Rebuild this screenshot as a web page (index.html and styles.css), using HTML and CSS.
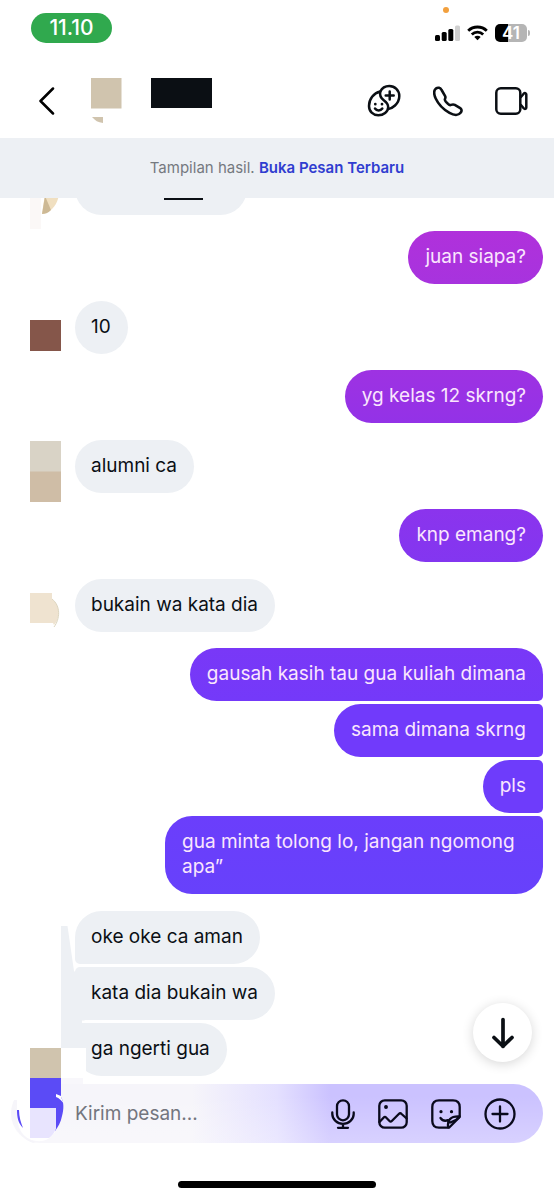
FILE: index.html
```html
<!DOCTYPE html>
<html lang="id">
<head>
<meta charset="utf-8">
<meta name="viewport" content="width=device-width, initial-scale=1">
<title>Pesan</title>
<link rel="stylesheet" href="styles.css">
</head>
<body>
<div class="screen">
  <div class="status">
    <span class="clock">11.10</span>
    <div class="indicators">
      <span class="rec-dot"></span>
      <svg width="25" height="16" viewBox="0 0 25 16"><rect x="0" y="10" width="5" height="6" rx="1.5"/><rect x="6.7" y="7" width="5" height="9" rx="1.5"/><rect x="13.3" y="4" width="5" height="12" rx="1.5"/><rect x="20" y="0.500" width="5" height="15.500" rx="1.5" fill="#d0d0d0"/></svg>
      <svg width="21" height="16" viewBox="0 0 21 16" fill="none" stroke="#000" stroke-width="2.800"><path d="M1.200 5.800a13.300 13.300 0 0 1 18.600 0"/><path d="M4.800 9.500a8.200 8.200 0 0 1 11.400 0"/><path d="M7.300 12a4.600 4.600 0 0 1 6.400 0l-3.200 3.300z" fill="#000" stroke="none"/></svg>
      <span class="battery">41</span>
    </div>
  </div>

  <header class="header">
    <button class="icon-btn" aria-label="Kembali"><svg width="16" height="28" viewBox="0 0 16 28" fill="none" stroke="#000" stroke-width="2.500" stroke-linecap="round" stroke-linejoin="round"><path d="M14 1.500 1.500 14 14 26.500"/></svg></button>
    <svg class="peer" width="31" height="46" viewBox="0 0 31 46"><path fill="#d0c4ae" d="M0 0h30.500v30.500H0zM1 39h11v6C7 44.500 4 42.500 1 39z"/></svg>
    <span class="peer-name"></span>
    <nav class="actions">
      <button class="icon-btn" aria-label="Stiker profil"><svg width="34" height="34" viewBox="0 0 34 34" fill="none" stroke="#0b0f14" stroke-width="2.500" stroke-linecap="round" stroke-linejoin="round"><path d="M13.300 7.500C15 4 18.500 2 22.300 2A10 10 0 0 1 32.300 12c0 4-1.700 7-4.300 9.500-2 1.900-4.300 3.100-6.800 3.500"/><path d="M13.300 7.500C6.500 9 2 15 2 22c0 5.500 4 9.300 9.300 9.300 5.200 0 9.700-3.300 9.900-8 .1-4-2.200-5.400-4.700-7.300-2.800-2.100-4-4.800-3.200-8.500z"/><path d="M22.700 7.500v8M18.700 11.500h8M8 24.500c1.700 2.500 5.600 2.500 7.300 0"/><path d="M8.300 20v.2M15 20v.2" stroke-width="2.700"/></svg></button>
      <button class="icon-btn" aria-label="Telepon"><svg width="30" height="31" viewBox="0 0 30 31" fill="none" stroke="#0b0f14" stroke-width="2.600" stroke-linejoin="round"><path d="M2.800 2.600C5 1 7.400 1.700 8.600 4L12 9.800c.8 1.400.5 2.200 0 3.200-.5 1 .1 1.800 1 2.800l2 2.100c1 1 1.900 1.500 3 1 1.400-.6 2.400-.8 3.800 0l5 3c2 1.200 2.200 3 1 4.700-2.200 3.100-6.800 2.900-11.300.3C10.500 23.500 5.500 18.500 2.700 12.500 1 8.700.4 4.800 2.800 2.600z"/></svg></button>
      <button class="icon-btn" aria-label="Panggilan video"><svg width="33" height="28" viewBox="0 0 33 28" fill="none" stroke="#0b0f14" stroke-width="2.500" stroke-linejoin="round"><rect x="1.300" y="1.300" width="24" height="25.400" rx="4.500"/><path d="M25.500 10.500l3.200-3.800c1-1.200 2.600-.7 2.600.8v13c0 1.500-1.600 2-2.600.8l-3.200-3.800"/></svg></button>
    </nav>
  </header>

  <p class="banner">Tampilan hasil. <a href="#latest">Buka Pesan Terbaru</a></p>

  <main class="chat">
    <div class="row in first">
      <svg class="avatar" viewBox="0 0 31 64"><path fill="#fbf8f7" d="M0 34h11v35H0z"/><path fill="#f0dfc0" d="M15 34h14c-1 10-8 19-17 20z"/><path fill="#cdb995" d="M15 36l6 14c-3 3-6 4-9 4z"/></svg>
      <p class="bubble hidden-name"><span class="redacted"></span></p>
    </div>
    <div class="row out"><p class="bubble c1">juan siapa?</p></div>
    <div class="row in"><svg class="avatar" viewBox="0 0 31 64"><path fill="#85564a" d="M0 21h31v31H0z"/></svg><p class="bubble">10</p></div>
    <div class="row out"><p class="bubble c2">yg kelas 12 skrng?</p></div>
    <div class="row in"><svg class="avatar" viewBox="0 0 31 64"><path fill="#d9d3c6" d="M0 3h31v31H0z"/><path fill="#cfbda6" d="M0 33.500h31v30.500H0z"/></svg><p class="bubble">alumni ca</p></div>
    <div class="row out"><p class="bubble c3">knp emang?</p></div>
    <div class="row in"><svg class="avatar" viewBox="0 0 31 64"><path fill="#efe3d0" d="M0 16h22v6c9 7 8 20 2 26l-1-2H0z"/><path fill="none" stroke="#ddd6c0" d="M22 22c9 7 8 20 2 28"/></svg><p class="bubble">bukain wa kata dia</p></div>
    <div class="row out stack">
      <p class="bubble c4">gausah kasih tau gua kuliah dimana</p>
      <p class="bubble c5">sama dimana skrng</p>
      <p class="bubble c6">pls</p>
      <p class="bubble c7">gua minta tolong lo, jangan ngomong apa”</p>
    </div>
    <div class="row in stack" id="latest">
      <p class="bubble">oke oke ca aman</p>
      <p class="bubble">kata dia bukain wa</p>
      <p class="bubble">ga ngerti gua</p>
    </div>
  </main>

  <form class="composer">
    <button class="scroll-down" type="button" aria-label="Ke pesan terbaru"><svg width="24" height="32" viewBox="0 0 24 32" fill="none" stroke="#0b0f14" stroke-width="3.700" stroke-linecap="round" stroke-linejoin="round"><path d="M12 2.500v27M3 20.500l9 8.800 9-8.800"/></svg></button>
    <svg class="camera" width="75" height="218" viewBox="11 926 75 218">
      <path fill="#edf0f4" d="M61 926h6.500L74 971l11 10v39l-3 3v25H61z"/>
      <path fill="#fff" d="M82 1020.500h4v2.500h-4z"/>
      <path fill="#fff" d="M61 1048h25v30H61zM11 1083h50v17H11z"/>
      <path fill="#f8f7fb" d="M61 1078h22v6H61z"/>
      <path fill="#fff" d="M17 1100h39v30c-3 6-8 10-14 11-9 1-17-3-21-9-3-6-4-12-4-20z"/>
      <path fill="#f6f5fa" d="M14 1100c-3 9-3 19 2 28 4 7 9 12 17 15l3-1c-8-2-14-7-17-14-4-9-5-18-3-28z"/>
      <path fill="#d0c4ae" d="M30 1048h31v30H30z"/>
      <path fill="#5b4bf6" d="M30 1078h31v19c3 5 3 12 1 19-1 6-4 11-7 15v-23H30z"/>
      <path fill="#5b4bf6" d="M17 1110c0 7 1 13 6 18-2-5-4-11-4-18z"/>
      <path fill="#fff" d="M56 1094l5 2v1l3 7c-2-3-5-6-8-7z"/>
      <path fill="#e8e4fe" d="M30 1108h26v21c-2 4-4 7-7 9H30z"/>
    </svg>
    <input class="field" type="text" placeholder="Kirim pesan..." aria-label="Kirim pesan">
    <button class="icon-btn" type="button" aria-label="Pesan suara"><svg width="24" height="30" viewBox="0 0 24 30" fill="none" stroke="#0a0a1c" stroke-width="2.300" stroke-linecap="round"><rect x="6" y="1.300" width="12" height="20" rx="6"/><path d="M1.300 13.500v1.500a10.700 9.800 0 0 0 21.400 0v-1.500M12 25v3.500M7 28.800h10"/></svg></button>
    <button class="icon-btn" type="button" aria-label="Galeri"><svg width="30" height="30" viewBox="0 0 30 30" fill="none" stroke="#0a0a1c" stroke-width="2.300" stroke-linecap="round" stroke-linejoin="round"><rect x="1.300" y="1.300" width="27.400" height="27.400" rx="5.500"/><path d="M1.500 23l4-4.300c1-1 1.800-1 2.800 0l3.200 3.300c.8.800 1.500.8 2.300 0l7-7c1-1 1.800-1 2.800 0l5 4.500"/><circle cx="8" cy="8" r="1.200" fill="#0a0a1c" stroke-width="1.500"/></svg></button>
    <button class="icon-btn" type="button" aria-label="Stiker"><svg width="30" height="30" viewBox="0 0 30 30" fill="none" stroke="#0a0a1c" stroke-width="2.300" stroke-linecap="round" stroke-linejoin="round"><path d="M8 1.300h14c4.500 0 6.700 2.200 6.700 6.700v10L18 28.700H8c-4.500 0-6.700-2.200-6.700-6.700V8c0-4.500 2.200-6.700 6.700-6.700z"/><path d="M17.200 28.300c-1.200-7 2.300-11.300 11.300-10.800M28 18.500c-3 3.300-5.500 3.800-9 5M9.500 19c2 2.800 4.500 3.300 7.500 2.200"/><path d="M10 12.500v.2M20.500 12.500v.2" stroke-width="3.200"/></svg></button>
    <button class="icon-btn" type="button" aria-label="Tambah"><svg width="32" height="32" viewBox="0 0 32 32" fill="none" stroke="#0a0a1c" stroke-width="2.300" stroke-linecap="round"><circle cx="16" cy="16" r="14.500"/><path d="M16 8.500v15M8.500 16h15"/></svg></button>
  </form>
  <div class="home-bar"></div>
</div>
</body>
</html>
```
FILE: styles.css
```css
* { box-sizing: border-box; }
body { margin: 0; background: #fff; color: #0b0f14; font-family: Inter, "Liberation Sans", sans-serif; font-size: 19px; }
p { margin: 0; }
svg { display: block; }
.screen { display: flex; flex-direction: column; min-height: 100vh; }

.status { display: flex; align-items: center; justify-content: space-between; padding: 13px 26px 5px 31px; }
.clock { width: 81px; height: 30px; border-radius: 15px; background: #30a94e; color: #fff; font-size: 21px; font-weight: 500; line-height: 30px; text-align: center; }
.indicators { position: relative; display: flex; align-items: center; gap: 7px; padding-top: 10px; }
.rec-dot { position: absolute; top: -7px; left: 8px; width: 6px; height: 6px; border-radius: 50%; background: #f2a03d; }
.battery { position: relative; width: 32px; height: 18px; margin-right: 1px; border-radius: 5px; background: linear-gradient(90deg, #000 41%, #b5b5b5 41%); color: #fff; font-size: 17px; font-weight: 600; line-height: 18px; text-align: center; }
.battery::after { content: ""; position: absolute; top: 6px; right: -3px; width: 2px; height: 6px; border-radius: 0 2px 2px 0; background: #b5b5b5; }

.header { display: flex; align-items: center; height: 90px; padding: 16px 26px 0 39px; }
.icon-btn { display: flex; flex: none; align-items: center; justify-content: center; padding: 0; border: 0; background: none; }
.peer { margin-left: 36px; }
.peer-name { width: 61px; height: 30px; margin: 0 0 16px 29px; background: #0b0f14; }
.actions { display: flex; align-items: center; gap: 32px; margin-left: auto; }

.banner { position: relative; z-index: 1; padding: 20px 0; background: #edf0f4; color: #75797f; font-size: 15px; line-height: 20px; text-align: center; }
.banner a { color: #303dd0; font-weight: 600; text-decoration: none; }

.chat { overflow: hidden; padding: 0 11px 8px 75px; }
.row { position: relative; display: flex; flex-direction: column; gap: 3px; }
.in { align-items: flex-start; margin-top: 17px; }
.out { align-items: flex-end; margin-top: 16px; }
.first { margin-top: -36px; }
.bubble { max-width: 378px; min-height: 53px; padding: 13px 17px 15px 16px; border-radius: 27px; background: #edf0f4; font-size: 19px; line-height: 25px; }
.out .bubble { padding: 13px 17px 15px; color: #fae6fd; }
.stack.out .bubble:not(:last-child) { border-bottom-right-radius: 5px; }
.stack.out .bubble:not(:first-child) { border-top-right-radius: 5px; }
.stack.in .bubble:not(:last-child) { border-bottom-left-radius: 5px; }
.stack.in .bubble:not(:first-child) { border-top-left-radius: 5px; }
.out .c1 { background: linear-gradient(#b031db, #a733de); }
.out .c2 { background: linear-gradient(#9e32e2, #9332e7); }
.out .c3 { background: linear-gradient(#8b34ed, #8336f0); }
.out .c4 { background: linear-gradient(#7938f7, #7439f9); }
.out .c5 { background: #713afb; }
.out .c6 { background: #6e3cfb; }
.out .c7 { background: linear-gradient(#6b3efb, #6741fb); }
.avatar { position: absolute; left: -45px; bottom: -9px; width: 31px; height: 64px; overflow: visible; }
.hidden-name { min-width: 172px; }
.redacted { display: block; width: 39px; height: 25px; margin-left: 73px; background: #0b0f14; }

.composer { position: relative; display: flex; align-items: center; gap: 23px; height: 59px; margin: 0 11px; padding: 0 27px 0 64px; border-radius: 30px; background: linear-gradient(rgba(255, 255, 255, 0) 20%, rgba(255, 255, 255, .25)), linear-gradient(90deg, #f6f5fa 34%, #e4e0ff 50%, #cbc2ff 60%); }
.field { flex: 1; min-width: 0; padding: 0; border: 0; outline: 0; background: none; color: #0b0f14; font: inherit; }
.field::placeholder { color: #73757e; opacity: 1; }
.camera { position: absolute; left: 0; bottom: -1px; pointer-events: none; }
.scroll-down { position: absolute; right: 11px; bottom: 81px; display: flex; align-items: center; justify-content: center; width: 59px; height: 59px; padding: 0; border: 0; border-radius: 50%; background: #fff; box-shadow: 0 2px 12px rgba(0, 0, 0, .16); }
.home-bar { width: 198px; height: 7px; margin: 38px auto 11px; border-radius: 4px; background: #000; }
```
